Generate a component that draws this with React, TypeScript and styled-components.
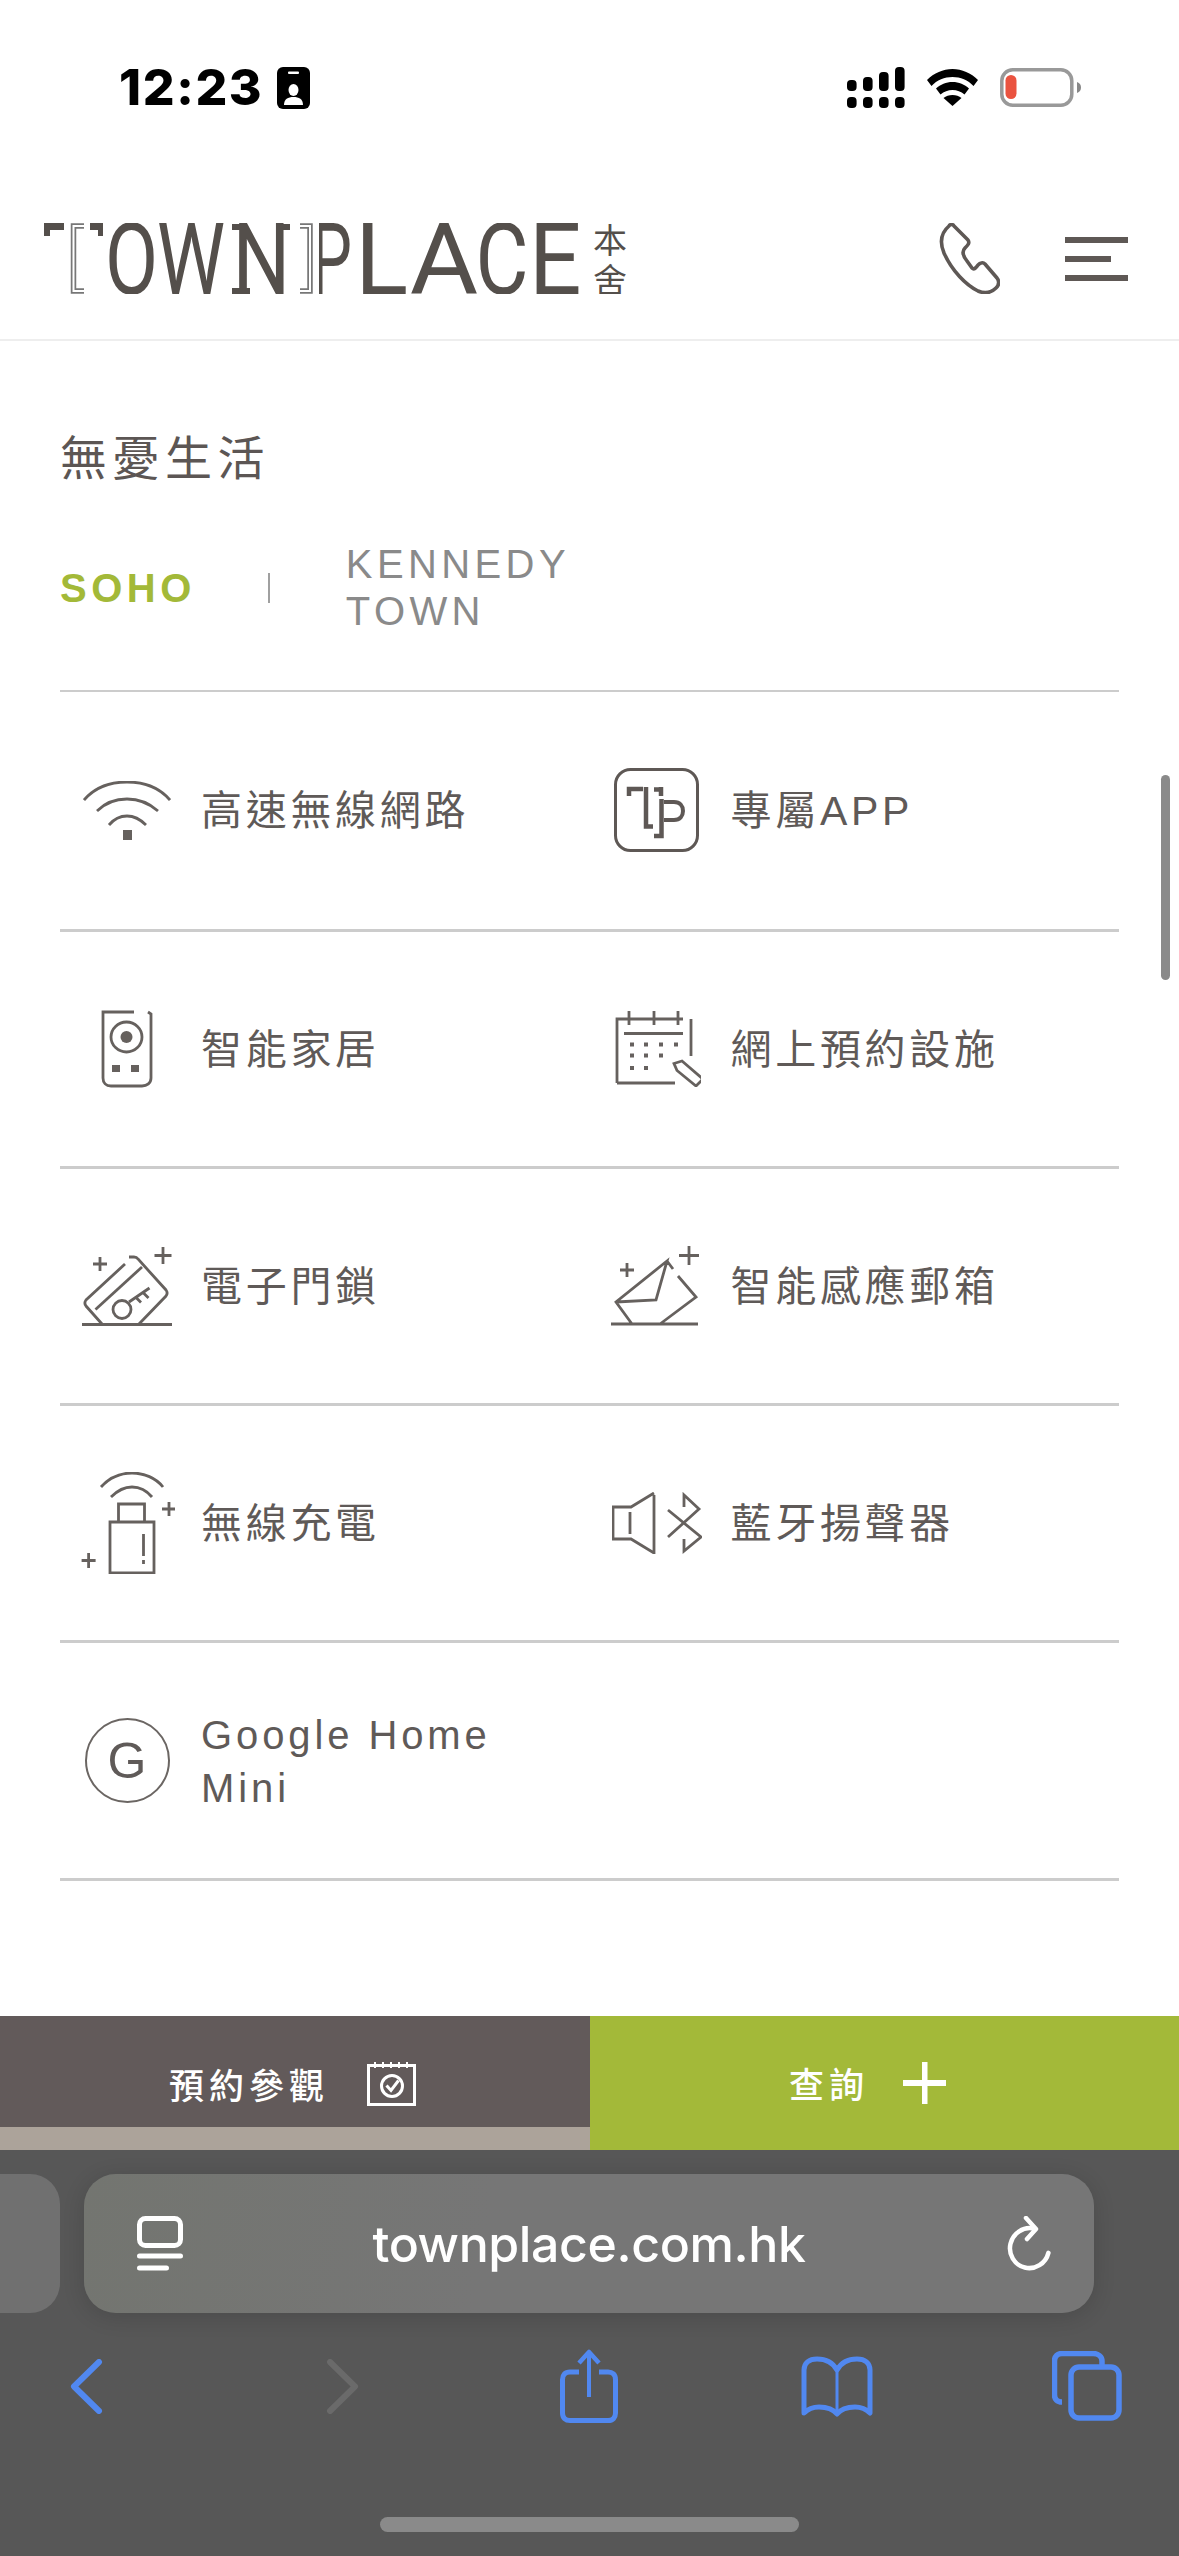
import React from "react";
import styled, { createGlobalStyle } from "styled-components";

const Global = createGlobalStyle`
  html, body { margin: 0; padding: 0; background: #fff; }
  body { font-family: "Liberation Sans", "Noto Sans CJK TC", sans-serif; }
  * { box-sizing: border-box; }
`;

const Page = styled.div`
  position: relative;
  width: 1179px;
  height: 2556px;
  overflow: hidden;
  display: flex;
  flex-direction: column;
  background: #fff;
`;

const StatusBar = styled.div`
  height: 150px;
  flex: none;
  display: flex;
  justify-content: space-between;
  align-items: flex-start;
  padding: 66px 98px 0 119px;
`;
const StatusLeft = styled.div`
  display: flex;
  align-items: center;
  gap: 14px;
  height: 43px;
`;
const Clock = styled.span`
  font: 800 50px/43px Inter, "Liberation Sans", sans-serif;
  letter-spacing: 1.6px;
  color: #000;
`;
const StatusRight = styled.div`
  display: flex;
  align-items: center;
  gap: 22px;
  height: 42px;
`;

const Header = styled.header`
  flex: none;
  height: 191px;
  padding: 73px 51px 0 44px;
  display: flex;
  justify-content: space-between;
  align-items: flex-start;
  border-bottom: 2px solid #eeeeee;
`;
const Actions = styled.div`
  display: flex;
  align-items: center;
  gap: 65px;
  height: 71px;
`;
const MenuButton = styled.div`
  width: 63px;
  display: flex;
  flex-direction: column;
  gap: 13px;
`;
const MenuLine = styled.span<{ $w: number }>`
  display: block;
  height: 6px;
  width: ${(p) => p.$w}px;
  background: #5e5855;
`;

const Main = styled.main`
  flex: 1;
  min-height: 0;
  padding: 84px 60px 0;
  overflow: hidden;
`;
const Title = styled.h2`
  margin: 0;
  font: 400 47px/60px "Noto Sans CJK TC", sans-serif;
  letter-spacing: 5.5px;
  color: #5c5654;
`;
const Tabs = styled.div`
  display: flex;
  align-items: center;
  margin: 56px 0 55px;
  height: 94px;
`;
const Tab = styled.span<{ $active?: boolean }>`
  font: ${(p) => (p.$active ? 700 : 400)} 40px/47px "Liberation Sans", sans-serif;
  letter-spacing: ${(p) => (p.$active ? 4.5 : 4.4)}px;
  color: ${(p) => (p.$active ? "#a3b938" : "#8a8a8a")};
  width: ${(p) => (p.$active ? "auto" : "240px")};
`;
const TabSep = styled.span`
  width: 2px;
  height: 30px;
  background: #a0a0a0;
  margin: 0 76px 0 72px;
`;
const List = styled.div`
  border-top: 2px solid #cccccc;
`;
const Row = styled.div<{ $h: number }>`
  display: grid;
  grid-template-columns: 1fr 1fr;
  height: ${(p) => p.$h}px;
  border-bottom: 3px solid #cccccc;
`;
const Cell = styled.div`
  display: flex;
  align-items: center;
`;
const IconSlot = styled.div`
  flex: none;
  width: 134px;
  margin-right: 7px;
  display: flex;
  justify-content: center;
`;
const Label = styled.span`
  font: 400 41px/53px "Liberation Sans", "Noto Sans CJK TC", sans-serif;
  letter-spacing: 3.7px;
  color: #5f5a58;
  padding-top: 2px;
`;
const LatinLabel = styled(Label)`
  font-size: 40px;
  width: 320px;
  letter-spacing: 3.9px;
`;
const GBadge = styled.div`
  width: 85px;
  height: 85px;
  border: 2px solid #6b6663;
  border-radius: 50%;
  display: flex;
  align-items: center;
  justify-content: center;
  font: 400 50px/1 "Liberation Sans", sans-serif;
  color: #5f5a58;
`;

const Scroll = styled.div`
  position: absolute;
  left: 1161px;
  top: 775px;
  width: 9px;
  height: 205px;
  border-radius: 5px;
  background: #8a8a8a;
`;

const Cta = styled.div`
  flex: none;
  display: grid;
  grid-template-columns: 590px 589px;
  height: 134px;
`;
const CtaLeft = styled.div`
  display: flex;
  flex-direction: column;
  background: #aca39a;
`;
const Visit = styled.div`
  height: 111px;
  background: #625a5a;
  display: flex;
  align-items: center;
  justify-content: center;
  gap: 38px;
  padding: 24px 5px 0 0;
`;
const Enquire = styled.div`
  background: #a3b939;
  display: flex;
  align-items: center;
  justify-content: center;
  gap: 34px;
  padding: 0 34px 0 0;
`;
const CtaText = styled.span`
  font: 500 35px/44px "Noto Sans CJK TC", sans-serif;
  letter-spacing: 5px;
  color: #fff;
`;

const Safari = styled.div`
  flex: none;
  height: 406px;
  background: #575757;
  padding-top: 24px;
  display: flex;
  flex-direction: column;
`;
const PillRow = styled.div`
  display: flex;
  gap: 24px;
`;
const SidePill = styled.div`
  width: 60px;
  height: 139px;
  border-radius: 0 30px 30px 0;
  background: #707070;
`;
const AddressPill = styled.div`
  width: 1010px;
  height: 139px;
  border-radius: 32px;
  background: linear-gradient(100deg, #737570, #767676 40%);
  box-shadow: 0 4px 22px rgba(0, 0, 0, 0.14);
  display: flex;
  align-items: center;
  justify-content: space-between;
  padding: 0 43px 0 53px;
`;
const Url = styled.span`
  font: 500 50px/60px Inter, "Liberation Sans", sans-serif;
  letter-spacing: -0.4px;
  color: #fff;
  margin-right: 12px;
`;
const Toolbar = styled.div`
  margin-top: 36px;
  height: 74px;
  display: flex;
  justify-content: space-between;
  align-items: center;
  padding: 0 56px 0 50px;
`;
const ToolCell = styled.div<{ $pad?: number }>`
  width: 73px;
  padding-left: ${(p) => p.$pad ?? 0}px;
  display: flex;
  justify-content: center;
`;
const HomeBar = styled.div`
  width: 419px;
  height: 15px;
  margin: 94px auto 0;
  border-radius: 8px;
  background: #8a8a8a;
`;

const ink = "#66615e";
const Line = { fill: "none", stroke: ink, strokeWidth: 2.8 } as const;
const logoInk = "#544f4b";

const letters = [
  { c: "O", x: 65, w: 45 },
  { c: "W", x: 118, w: 58 },
  { c: "N", x: 193, w: 49 },
  { c: "L", x: 315, w: 45 },
  { c: "A", x: 371, w: 58 },
  { c: "C", x: 435.5, w: 45 },
  { c: "E", x: 489, w: 44.5 },
];

const Logo = () => (
  <svg width="582" height="71" viewBox="0 0 582 71" role="img" aria-label="TOWNPLACE 本舍">
    <g fill={logoInk} fontFamily="Roboto, 'Liberation Sans', sans-serif" fontWeight="400" fontSize="100">
      <text x="-1" y="71" textLength="61" lengthAdjust="spacingAndGlyphs">T</text>
      {letters.map((l) => (
        <text
          key={l.c}
          x={l.x - l.w * 0.09}
          y="71"
          textLength={l.w * 1.18}
          lengthAdjust="spacingAndGlyphs"
        >
          {l.c}
        </text>
      ))}
      <text x="267" y="71" textLength="41" lengthAdjust="spacingAndGlyphs">P</text>
    </g>
    <rect x="20" y="0" width="26" height="71" fill="#fff" />
    <rect x="20" y="7" width="30" height="64" fill="#fff" />
    <g fill={logoInk}>
      <rect x="0" y="0" width="6" height="13" />
      <rect x="54" y="0" width="5" height="13" />
      <rect x="188" y="1" width="11" height="6" />
      <rect x="188" y="65" width="18" height="6" />
      <rect x="236" y="1" width="10" height="6" />
    </g>
    <rect x="256" y="0" width="19" height="71" fill="#fff" />
    <path d="M40 3H29.500V68H40" fill="none" stroke="#777" strokeWidth="5.500" />
    <path d="M40 3H29.500V68H40" fill="none" stroke="#fff" strokeWidth="2" />
    <path d="M256 3H266V68H256" fill="none" stroke="#777" strokeWidth="5.500" />
    <path d="M256 3H266V68H256" fill="none" stroke="#fff" strokeWidth="2" />
    <g fill={logoInk} fontFamily="'Noto Sans CJK TC', sans-serif" fontSize="34" textAnchor="middle">
      <text x="566" y="30">本</text>
      <text x="566" y="70">舍</text>
    </g>
  </svg>
);

const IdIcon = () => (
  <svg width="33" height="42" viewBox="0 0 33 42">
    <rect width="33" height="42" rx="6" fill="#000" />
    <rect x="11" y="4.500" width="11" height="2.500" rx="1" fill="#fff" />
    <ellipse cx="16.5" cy="23" rx="5" ry="6" fill="#fff" />
    <path d="M7 38c0-6 4-8 9.500-8S26 32 26 38z" fill="#fff" />
  </svg>
);
const SignalIcon = () => (
  <svg width="58" height="41" viewBox="0 0 58 41" fill="#000">
    <rect x="0" y="13" width="9.600" height="11" rx="4" />
    <rect x="16" y="10" width="9.600" height="14" rx="4" />
    <rect x="32" y="5" width="9.600" height="19" rx="4" />
    <rect x="48" y="0" width="9.600" height="24" rx="4" />
    {[0, 16, 32, 48].map((x) => (
      <rect key={x} x={x} y="30" width="9.600" height="11" rx="4" />
    ))}
  </svg>
);
const WifiIcon = () => (
  <svg width="51" height="37" viewBox="0 0 51 37" fill="#000">
    <path d="M25.500 0C35 0 44 4 51 11l-4.500 6C41 11 33.500 8 25.500 8S10 11 4.500 17L0 11C7 4 16 0 25.500 0z" />
    <path d="M25.500 13c6.500 0 12 2.500 16.500 6.500l-4.500 6C34 22.500 30 21 25.500 21S17 22.500 13.500 25.500L9 19.500C13.500 15.500 19 13 25.500 13z" />
    <path d="M25.500 26c3.500 0 6.500 1 9 3L25.500 37l-9-8c2.500-2 5.500-3 9-3z" />
  </svg>
);
const BatteryIcon = () => (
  <svg width="81" height="39" viewBox="0 0 81 39">
    <rect x="1.800" y="1.800" width="70" height="35.400" rx="11" fill="none" stroke="#999" strokeWidth="3.500" />
    <rect x="5.500" y="7" width="11" height="24" rx="5.500" fill="#ea5340" />
    <path d="M77 14c3 1 4 3 4 5.500s-1 4.500-4 5.500z" fill="#888" />
  </svg>
);
const PhoneIcon = () => (
  <svg width="62" height="71" viewBox="0 0 62 71" fill="none" stroke="#5e5855" strokeWidth="3.600" strokeLinejoin="round">
    <path d="M11 3c1-2 4-2 5 0l14 14c2 3 0 5-3 8-3 3-2 8 2 13l5 7c2 2 4 0 6-3 2-2 5-3 7-1l12 14c3 4 2 7-1 10-5 5-11 6-18 3C28 62 14 48 6 30 1 18 4 9 11 3z" />
  </svg>
);

const WifiLine = () => (
  <svg width="88" height="59" viewBox="0 0 88 59" {...Line}>
    <path d="M1 19C12 6 27 1 44 1s32 5 43 18" />
    <path d="M14 30c8-8 18-12 30-12s22 4 31 12" />
    <path d="M26 44c5-6 11-9 18-9s13 3 19 9" />
    <rect x="40" y="49" width="9" height="10" fill={ink} stroke="none" />
  </svg>
);
const AppIcon = () => (
  <svg width="85" height="85" viewBox="0 0 85 85" fill="none" stroke="#5e5855" strokeWidth="3">
    <rect x="1.500" y="1.500" width="82" height="81" rx="15" />
    <path d="M15 28v-7h14M40 21.500h9M47 19v9" strokeWidth="4.500" />
    <path d="M32 19v39.500h7" strokeWidth="4.500" />
    <path d="M47.500 31v37H40" strokeWidth="4.500" />
    <path d="M50 34h10c6 0 9 4 9 9s-3 9-9 9H50" strokeWidth="4" />
  </svg>
);
const RemoteIcon = () => (
  <svg width="52" height="78" viewBox="0 0 52 78" {...Line}>
    <path d="M33 2H2v66c0 5 3 8 8 8h31c5 0 9-3 9-8V4l-3-2" />
    <ellipse cx="25.500" cy="27" rx="15.500" ry="15" />
    <circle cx="25.500" cy="27" r="6" fill={ink} stroke="none" />
    <rect x="11" y="55" width="8" height="7" fill={ink} stroke="none" />
    <rect x="30" y="55" width="8" height="7" fill={ink} stroke="none" />
  </svg>
);
const CalendarIcon = () => (
  <svg width="88" height="76" viewBox="-3 0 88 76" {...Line}>
    <path d="M1 72V8h66M75 8v37M1 72h58M13 0v14M38 0v14M62 0v14M8 22.500h59" />
    {[16, 30, 45, 60].map((x) => (
      <rect key={`a${x}`} x={x - 2} y="31.500" width="4" height="4" fill={ink} stroke="none" />
    ))}
    {[16, 30, 45].map((x) => (
      <rect key={`b${x}`} x={x - 2} y="42.500" width="4" height="4" fill={ink} stroke="none" />
    ))}
    {[16, 30].map((x) => (
      <rect key={`c${x}`} x={x - 2} y="55" width="4" height="4" fill={ink} stroke="none" />
    ))}
    <path d="M58 52.500 66 50l21 18-7 7-19-15.500z" />
  </svg>
);
const CardIcon = () => (
  <svg width="91" height="80" viewBox="0 0 91 80" {...Line}>
    <path d="M0 78.500h90M20 78 4 60c-1.500-2-1.500-4 0-6L43 18M47 11h5c2 0 3 .5 4 2l28 31c1.500 2 1.500 4 0 6L57 78" />
    <path d="M13.500 63.500 60 21" />
    <circle cx="40" cy="63.500" r="9" />
    <path d="M47 56 67.500 42M61 46.500l5.500 5.500M54 51.500l5 5" />
    <path d="M81 1v17M72.500 9.500h17M18 11v14M11 18h14" />
  </svg>
);
const MailIcon = () => (
  <svg width="92" height="80" viewBox="3 0 92 80" {...Line}>
    <path d="M0 78h90M24 78 8 56 59 15 48 54 8 56M59 15l6 8M70 30l18 21-36 27" />
    <path d="M81 0v19M71 9.500h20M19 17v14M12 24h14" />
  </svg>
);
const ChargeIcon = () => (
  <svg width="96" height="102" viewBox="-2 0 96 102" {...Line}>
    <path d="M20 15C28 6 39 1 51 1s24 5 31 14M30 25c6-6 13-10 21-10s15 4 20 10" />
    <path d="M37.500 50V32h26v18M29 50h44v51H29z" />
    <path d="M62.500 62v22M62.500 88v4" />
    <path d="M88 30v14M81 37h14M7.600 81v15M.6 88.500h14" />
  </svg>
);
const SpeakerIcon = () => (
  <svg width="90" height="62" viewBox="0 0 90 62" {...Line}>
    <path d="M42 1 19 15H1v32h18l23 14V3M18 20v22" />
    <path d="M72 15V3l15 14-31 28M56 18l33 27-17 14V47" />
  </svg>
);
const NoteIcon = () => (
  <svg width="49" height="44" viewBox="0 0 49 44" fill="none" stroke="#fff" strokeWidth="3">
    <path d="M1.500 3.500h46v39h-46z" />
    <path d="M8 0v6M16 0v6M24 0v6M32 0v6M40 0v6" strokeWidth="2" />
    <circle cx="25" cy="24" r="10.500" />
    <path d="M19.500 23.500l4.500 5 7.500-10" strokeWidth="3" />
  </svg>
);
const PlusIcon = () => (
  <svg width="43" height="42" viewBox="0 0 43 42" fill="#fff">
    <rect x="19" y="0" width="5.500" height="42" />
    <rect x="0" y="18" width="43" height="6" />
  </svg>
);
const PageIcon = () => (
  <svg width="46" height="55" viewBox="0 0 46 55" fill="none" stroke="#fff" strokeWidth="5" strokeLinecap="round">
    <rect x="2.500" y="2.500" width="41" height="27" rx="6" />
    <path d="M2.500 40h41M2.500 52h27" />
  </svg>
);
const ReloadIcon = () => (
  <svg width="44" height="55" viewBox="0 0 44 55" fill="none" stroke="#fff" strokeWidth="4.500" strokeLinecap="round" strokeLinejoin="round">
    <path d="M22 12a19.500 20 0 1 0 20 20" transform="rotate(14 22 32)" />
    <path d="M19 2l10 11-9 10" />
  </svg>
);
const blue = "#5188f0";
const BackIcon = ({ color }: { color: string }) => (
  <svg width="33" height="55" viewBox="0 0 33 55" fill="none" stroke={color} strokeWidth="6" strokeLinecap="round" strokeLinejoin="round">
    <path d="M29 3 4 27.500 29 52" />
  </svg>
);
const ForwardIcon = () => (
  <svg width="33" height="55" viewBox="0 0 33 55" fill="none" stroke="#6a6a6a" strokeWidth="6" strokeLinecap="round" strokeLinejoin="round">
    <path d="M4 3 29 27.500 4 52" />
  </svg>
);
const ShareIcon = () => (
  <svg width="58" height="74" viewBox="0 0 58 74" fill="none" stroke={blue} strokeWidth="5" strokeLinejoin="round">
    <path d="M19 23h-9c-5 0-7.500 3-7.500 7.500V64c0 5 3 7.500 7.500 7.500h38c5 0 7.500-3 7.500-7.500V30.500c0-5-3-7.500-7.500-7.500h-9" />
    <path d="M29 3v45" strokeWidth="4" />
    <path d="M19 14 29 3l10 11" strokeWidth="4.500" />
  </svg>
);
const BookIcon = () => (
  <svg width="72" height="61" viewBox="0 0 72 61" fill="none" stroke={blue} strokeWidth="5" strokeLinejoin="round">
    <path d="M36 14C31 5 24 3 16 3 8 3 3 7 3 14v43c5-5 9-6 15-6 8 0 14 2 18 7 4-5 10-7 18-7 6 0 10 1 15 6V14c0-7-5-11-13-11-8 0-15 2-20 11z" />
    <path d="M36 14v44" strokeWidth="3" />
  </svg>
);
const TabsIcon = () => (
  <svg width="70" height="70" viewBox="0 0 70 70" fill="none" stroke={blue} strokeWidth="5.500">
    <path d="M10 51c-5 0-7.500-3-7.500-7V10c0-5 3-7.500 7.500-7.500h31c5 0 9 3 9 7.500v4" />
    <rect x="19" y="16" width="48" height="51" rx="8" />
  </svg>
);

const rows = [
  {
    h: 240,
    cells: [
      { icon: <WifiLine />, text: "高速無線網路" },
      { icon: <AppIcon />, text: "專屬APP" },
    ],
  },
  {
    h: 237,
    cells: [
      { icon: <RemoteIcon />, text: "智能家居" },
      { icon: <CalendarIcon />, text: "網上預約設施" },
    ],
  },
  {
    h: 237,
    cells: [
      { icon: <CardIcon />, text: "電子門鎖" },
      { icon: <MailIcon />, text: "智能感應郵箱" },
    ],
  },
  {
    h: 237,
    cells: [
      { icon: <ChargeIcon />, text: "無線充電" },
      { icon: <SpeakerIcon />, text: "藍牙揚聲器" },
    ],
  },
];

export default function App() {
  return (
    <Page>
      <Global />
      <StatusBar>
        <StatusLeft>
          <Clock>12:23</Clock>
          <IdIcon />
        </StatusLeft>
        <StatusRight>
          <SignalIcon />
          <WifiIcon />
          <BatteryIcon />
        </StatusRight>
      </StatusBar>
      <Header>
        <Logo />
        <Actions>
          <PhoneIcon />
          <MenuButton>
            <MenuLine $w={63} />
            <MenuLine $w={46} />
            <MenuLine $w={63} />
          </MenuButton>
        </Actions>
      </Header>
      <Main>
        <Title>無憂生活</Title>
        <Tabs>
          <Tab $active>SOHO</Tab>
          <TabSep />
          <Tab>KENNEDY TOWN</Tab>
        </Tabs>
        <List>
          {rows.map((r) => (
            <Row key={r.cells[0].text} $h={r.h}>
              {r.cells.map((c) => (
                <Cell key={c.text}>
                  <IconSlot>{c.icon}</IconSlot>
                  <Label>{c.text}</Label>
                </Cell>
              ))}
            </Row>
          ))}
          <Row $h={238}>
            <Cell>
              <IconSlot>
                <GBadge>G</GBadge>
              </IconSlot>
              <LatinLabel>Google Home Mini</LatinLabel>
            </Cell>
          </Row>
        </List>
      </Main>
      <Scroll />
      <Cta>
        <CtaLeft>
          <Visit>
            <CtaText>預約參觀</CtaText>
            <NoteIcon />
          </Visit>
        </CtaLeft>
        <Enquire>
          <CtaText>查詢</CtaText>
          <PlusIcon />
        </Enquire>
      </Cta>
      <Safari>
        <PillRow>
          <SidePill />
          <AddressPill>
            <PageIcon />
            <Url>townplace.com.hk</Url>
            <ReloadIcon />
          </AddressPill>
        </PillRow>
        <Toolbar>
          <ToolCell><BackIcon color={blue} /></ToolCell>
          <ToolCell $pad={12}><ForwardIcon /></ToolCell>
          <ToolCell $pad={4}><ShareIcon /></ToolCell>
          <ToolCell><BookIcon /></ToolCell>
          <ToolCell><TabsIcon /></ToolCell>
        </Toolbar>
        <HomeBar />
      </Safari>
    </Page>
  );
}
